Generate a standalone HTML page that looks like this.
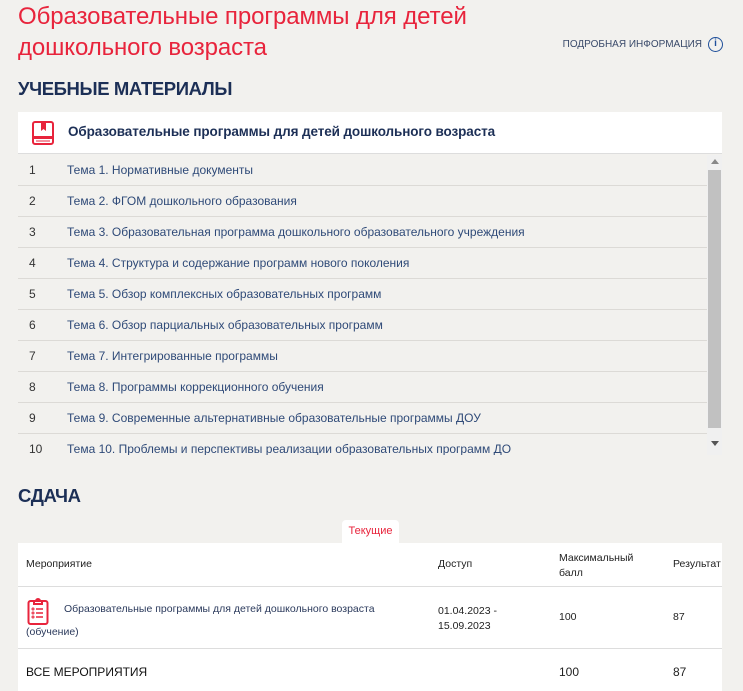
<!DOCTYPE html>
<html><head><meta charset="utf-8"><style>
*{margin:0;padding:0;box-sizing:border-box}
body{width:743px;height:691px;overflow:hidden;background:#f2f1ee;font-family:"Liberation Sans",sans-serif;color:#2b3a5c;position:relative}
.abs{position:absolute}
h1{position:absolute;left:18px;top:1px;font-size:24px;font-weight:normal;color:#e8243c;line-height:31px;width:520px;letter-spacing:-0.1px}
.info{position:absolute;right:20px;top:37px;font-size:10px;color:#3a4a6a;display:flex;align-items:center}
.info span.i{display:inline-block;width:15px;height:15px;border:1.5px solid #1f4f9a;border-radius:50%;color:#1f4f9a;font-size:10px;line-height:12px;text-align:center;margin-left:6px;font-weight:bold}
h2{position:absolute;left:18px;font-size:18.5px;font-weight:bold;color:#1c2f56;letter-spacing:-0.4px}
.lh{position:absolute;left:18px;top:112px;width:704px;height:42px;background:#fff;border-bottom:1px solid #ddd}
.lh .t{position:absolute;left:50px;top:12px;font-size:13.5px;color:#1c2f56;font-weight:bold;letter-spacing:-0.1px}
.list{position:absolute;left:18px;top:155px;width:689px;height:300px;overflow:hidden}
.row{height:31px;border-bottom:1px solid #dcdad6;display:flex;align-items:center;font-size:12px;color:#2f4a78}
.row .n{width:49px;padding-left:11px;color:#333}
.sb{position:absolute;left:707px;top:155px;width:15px;height:300px;background:#f0f0f0}
.thumb{position:absolute;left:708px;top:170px;width:13px;height:258px;background:#c1c1c1}
.tab{position:absolute;left:342px;top:520px;width:57px;height:24px;background:#fff;border-radius:4px 4px 0 0;font-size:11px;color:#e8243c;text-align:center;line-height:22px}
.tbl{position:absolute;left:18px;top:543px;width:704px;height:148px;background:#fff;font-size:10.5px;color:#222}
.tbl .c{position:absolute}
</style></head><body>
<h1>Образовательные программы для детей дошкольного возраста</h1>
<div class="info">ПОДРОБНАЯ ИНФОРМАЦИЯ<span class="i">i</span></div>
<h2 style="top:78px">УЧЕБНЫЕ МАТЕРИАЛЫ</h2>
<div class="lh">
<svg class="abs" style="left:14px;top:9px" width="22" height="24" viewBox="0 0 22 24"><rect x="1" y="1" width="20" height="22" rx="2" fill="none" stroke="#e8243c" stroke-width="2"/><path d="M9 1v9l2.5-2 2.5 2V1" fill="#e8243c"/><rect x="1" y="15" width="20" height="3" fill="#e8243c"/><line x1="4" y1="20" x2="18" y2="20" stroke="#e8243c" stroke-width="1"/></svg>
<div class="t">Образовательные программы для детей дошкольного возраста</div></div>
<div class="list">
<div class="row"><span class="n">1</span>Тема 1. Нормативные документы</div>
<div class="row"><span class="n">2</span>Тема 2. ФГОМ дошкольного образования</div>
<div class="row"><span class="n">3</span>Тема 3. Образовательная программа дошкольного образовательного учреждения</div>
<div class="row"><span class="n">4</span>Тема 4. Структура и содержание программ нового поколения</div>
<div class="row"><span class="n">5</span>Тема 5. Обзор комплексных образовательных программ</div>
<div class="row"><span class="n">6</span>Тема 6. Обзор парциальных образовательных программ</div>
<div class="row"><span class="n">7</span>Тема 7. Интегрированные программы</div>
<div class="row"><span class="n">8</span>Тема 8. Программы коррекционного обучения</div>
<div class="row"><span class="n">9</span>Тема 9. Современные альтернативные образовательные программы ДОУ</div>
<div class="row"><span class="n">10</span>Тема 10. Проблемы и перспективы реализации образовательных программ ДО</div>
</div>
<div class="sb"></div><div class="thumb"></div>
<div class="abs" style="left:711px;top:159px;width:0;height:0;border-left:4px solid transparent;border-right:4px solid transparent;border-bottom:5px solid #888"></div>
<div class="abs" style="left:711px;top:441px;width:0;height:0;border-left:4px solid transparent;border-right:4px solid transparent;border-top:5px solid #555"></div>
<h2 style="top:485px">СДАЧА</h2>
<div class="tab">Текущие</div>
<div class="tbl">
<div class="c" style="left:8px;top:15px">Мероприятие</div>
<div class="c" style="left:420px;top:15px">Доступ</div>
<div class="c" style="left:541px;top:8px;line-height:15px">Максимальный<br>балл</div>
<div class="c" style="left:655px;top:15px">Результат</div>
<div class="c" style="left:0;top:43px;width:704px;border-top:1px solid #ddd"></div>
<svg class="c" style="left:9px;top:53px" width="22" height="30" viewBox="0 0 22 30"><rect x="1.5" y="5" width="19" height="23" rx="2" fill="none" stroke="#e8243c" stroke-width="2"/><path d="M7 5h8v3H7z M9 5a2 2 0 0 1 4 0" fill="none" stroke="#e8243c" stroke-width="2"/><circle cx="6" cy="13" r="1" fill="none" stroke="#e8243c"/><circle cx="6" cy="17" r="1" fill="none" stroke="#e8243c"/><circle cx="6" cy="21" r="1" fill="none" stroke="#e8243c"/><path d="M9 13h7M9 17h7M9 21h7" stroke="#e8243c" stroke-width="1.5"/></svg>
<div class="c" style="left:46px;top:60px;color:#2b3a5c">Образовательные программы для детей дошкольного возраста</div>
<div class="c" style="left:8px;top:83px;color:#2b3a5c">(обучение)</div>
<div class="c" style="left:420px;top:61px;line-height:15px">01.04.2023 -<br>15.09.2023</div>
<div class="c" style="left:541px;top:68px">100</div>
<div class="c" style="left:655px;top:68px">87</div>
<div class="c" style="left:0;top:105px;width:704px;border-top:1px solid #ddd"></div>
<div class="c" style="left:8px;top:122px;font-size:12px;color:#111">ВСЕ МЕРОПРИЯТИЯ</div>
<div class="c" style="left:541px;top:122px;font-size:12px">100</div>
<div class="c" style="left:655px;top:122px;font-size:12px">87</div>
</div>
</body></html>
